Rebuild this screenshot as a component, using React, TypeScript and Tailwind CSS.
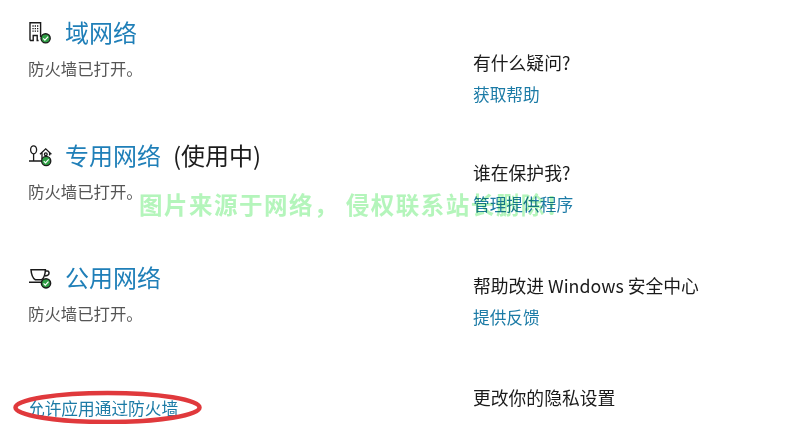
const font = { fontFamily: '"Noto Sans CJK SC", "Liberation Sans", sans-serif' };

const Check = ({ cx, cy }: { cx: number; cy: number }) => (
  <g>
    <circle cx={cx} cy={cy} r="4.6" fill="#2f9e44" />
    <path d={`M${cx - 2.4} ${cy + 0.1}l1.7 1.7 3.2-3.4`} fill="none" stroke="#fff" strokeWidth="1.2" />
  </g>
);

const DomainIcon = () => (
  <svg width="24" height="24" viewBox="0 0 24 24" fill="none" stroke="#1a1a1a" strokeWidth="1.4">
    <path d="M2 20.5V2.7h10.6v14.4M2 20.5h3.2v-5h4v5h1.4" />
    <path d="M4.4 6h1.3M6.7 6h1.3M9 6h1.3M4.4 8.6h1.3M6.7 8.6h1.3M9 8.6h1.3M4.4 11.2h1.3M6.7 11.2h1.3M9 11.2h1.3" strokeWidth="1.3" />
    <Check cx={17.6} cy={18.3} />
  </svg>
);

const HomeIcon = () => (
  <svg width="24" height="24" viewBox="0 0 24 24" fill="none" stroke="#1a1a1a" strokeWidth="1.3">
    <ellipse cx="5.6" cy="6.8" rx="3" ry="4" />
    <path d="M5.6 10.8v7M1 18h14" />
    <path d="M12 11.2l5.7-5.4 5.7 5.4M14 9.6v6.6M21.6 9.6v3" />
    <circle cx="17.8" cy="11.2" r="1.4" />
    <Check cx={18.2} cy={18} />
  </svg>
);

const CupIcon = () => (
  <svg width="24" height="24" viewBox="0 0 24 24" fill="none" stroke="#1a1a1a" strokeWidth="1.5">
    <path d="M3 4.7h14.4c-.2 4.600-1.400 8.300-3.700 10H7.200C4.800 13 3.300 9.300 3 4.700z" />
    <path d="M17 6h2.400c1.800 0 2.400 2.900.4 4.200l-2.800.8M1 17.300h13" />
    <Check cx={18} cy={18.300} />
  </svg>
);

const Network = ({ icon, name, extra, className }: { icon: React.ReactNode; name: string; extra?: string; className: string }) => (
  <section className={className}>
    <div className="flex h-[36px] items-center">
      <span className="w-[37px] shrink-0">{icon}</span>
      <h2 className="text-[24px] leading-[36px] font-normal text-[#1f7fb8]">{name}</h2>
      {extra && <span className="ml-[12px] text-[24px] leading-[36px] text-[#1c1c1c]">{extra}</span>}
    </div>
    <p className="mt-[5px] text-[16.4px] leading-[26px] text-[#555555]">防火墙已打开。</p>
  </section>
);

const Help = ({ q, link, className }: { q: string; link?: string; className: string }) => (
  <section className={className}>
    <p className="text-[17.8px] leading-[26px] text-[#1a1a1a]">{q}</p>
    {link && <a className="mt-[6px] block text-[16.7px] leading-[26px] text-[#1c7ba6]">{link}</a>}
  </section>
);

export default function App() {
  return (
    <div className="relative h-[424px] w-[797px] overflow-hidden bg-white" style={font}>
      <div className="flex">
        <div className="w-[473px] shrink-0 pl-[28px]">
          <Network className="pt-[14px]" icon={<DomainIcon />} name="域网络" />
          <Network className="pt-[56px]" icon={<HomeIcon />} name="专用网络" extra="(使用中)" />
          <Network className="pt-[55px]" icon={<CupIcon />} name="公用网络" />
          <a className="mt-[69px] block text-[16.7px] leading-[26px] text-[#1c7ba6]">允许应用通过防火墙</a>
        </div>
        <div className="flex-1">
          <Help className="pt-[49px]" q="有什么疑问?" link="获取帮助" />
          <Help className="pt-[52px]" q="谁在保护我?" link="管理提供程序" />
          <Help className="pt-[55px]" q="帮助改进 Windows 安全中心" link="提供反馈" />
          <Help className="pt-[54px]" q="更改你的隐私设置" />
        </div>
      </div>
      <svg className="absolute left-[12px] top-[390px]" width="192" height="34" viewBox="0 0 192 34" fill="none">
        <ellipse cx="95.500" cy="17.500" rx="92" ry="14.500" stroke="#e0393c" strokeWidth="4.500" />
      </svg>
      <div className="absolute left-[139px] top-[187px] text-[23.500px] leading-[34px] font-bold tracking-[1.500px] whitespace-nowrap text-[#b4f5bb] mix-blend-multiply">
        图片来源于网络， 侵权联系站长删除！
      </div>
    </div>
  );
}
